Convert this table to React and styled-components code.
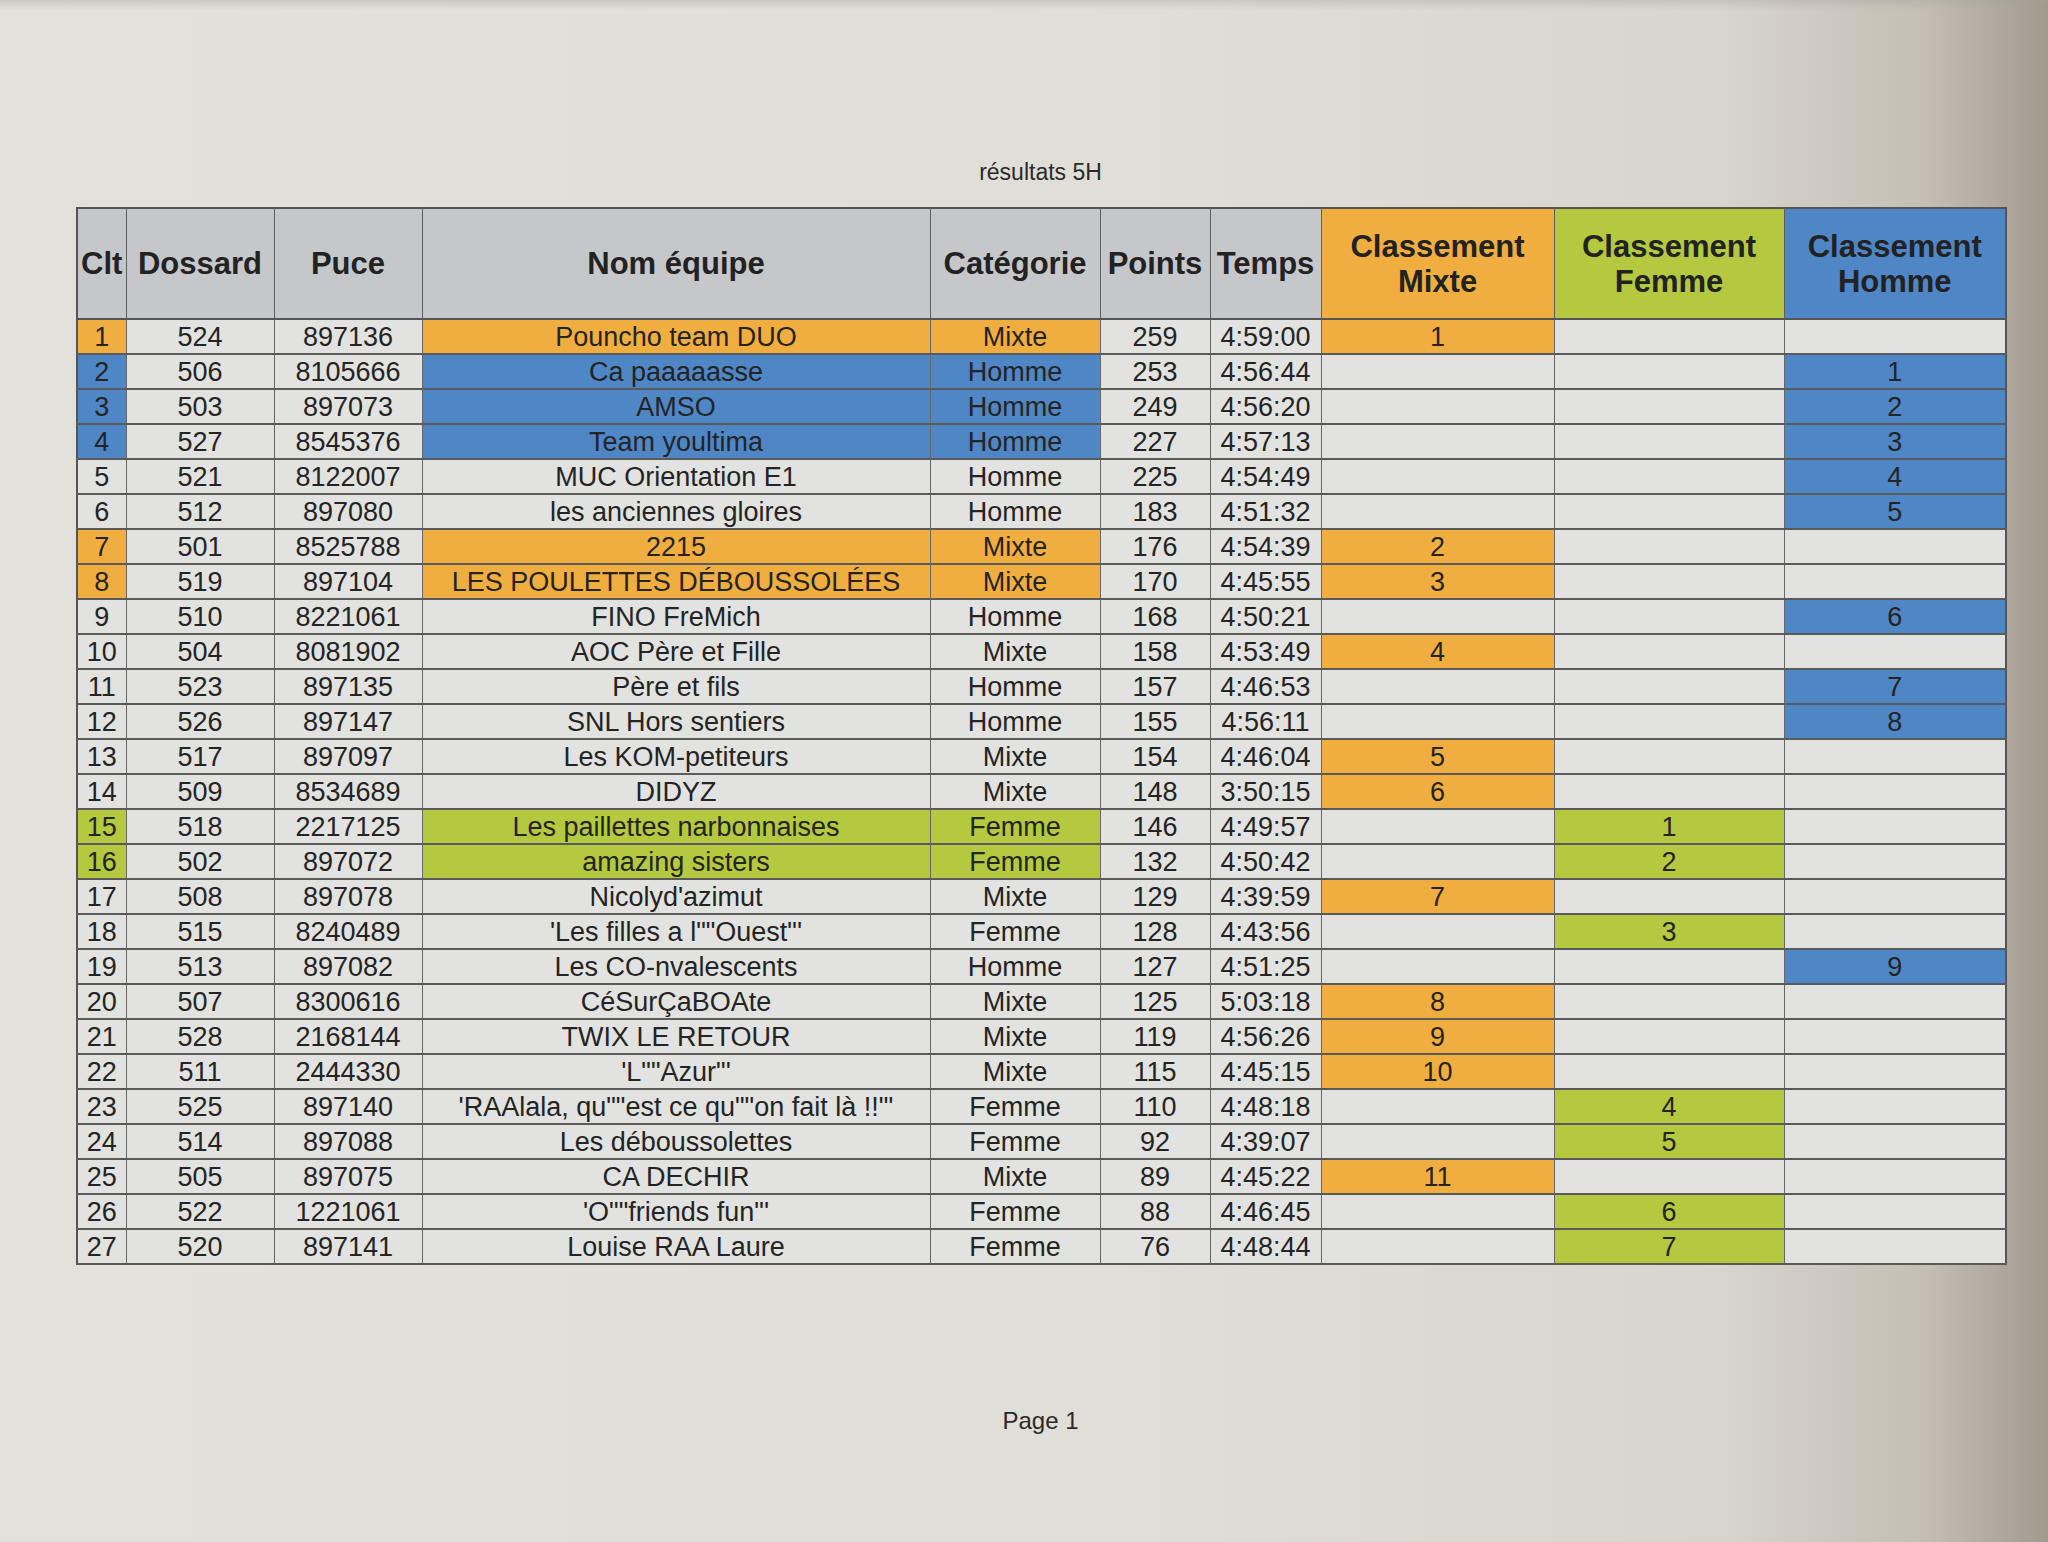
import React from "react"
import styled, { createGlobalStyle } from "styled-components"

const GlobalStyle = createGlobalStyle`
  html, body {
    margin: 0;
    padding: 0;
  }
  body {
    min-height: 1542px;
    font-family: "Liberation Sans", Arial, sans-serif;
    color: #232323;
    background:
      linear-gradient(180deg, rgba(160, 160, 158, 0.35) 0px, rgba(160, 160, 158, 0) 10px),
      linear-gradient(90deg, #e3e1dc 0%, #e0ded8 55%, #d8d5ce 84%, #c4beb4 94%, #a39a8e 100%);
  }
`

const tones = {
  orange: "#f1ae40",
  blue: "#4f86c6",
  green: "#b4c93f",
  grey: "#c6c7ca",
  plain: "#e2e2e0",
}

const Page = styled.div`
  width: 1929px;
  padding: 158px 0 0 76px;
`

const Title = styled.div`
  text-align: center;
  font-size: 23px;
  line-height: 28px;
  color: #2a2a2a;
  margin-bottom: 21px;
`

const Sheet = styled.table`
  width: 1929px;
  table-layout: fixed;
  border-collapse: collapse;
  border: 2px solid #555;
`

const HeadCell = styled.th`
  height: 109px;
  padding: 0;
  background: ${(p) => tones[p.$tone || "grey"]};
  border: 1.5px solid #5e5e5e;
  border-bottom: 2px solid #555;
  font-size: 31px;
  line-height: 35px;
  font-weight: 700;
  text-align: center;
  vertical-align: middle;
  white-space: nowrap;
  color: #222;
`

const Row = styled.tr`
  height: 33px;
`

const Cell = styled.td`
  padding: 0;
  height: 33px;
  background: ${(p) => tones[p.$tone || "plain"]};
  border-left: 1.5px solid #666;
  border-right: 1.5px solid #666;
  border-bottom: 2px solid #5a5a5a;
  font-size: 27px;
  line-height: 30px;
  text-align: center;
  vertical-align: middle;
  white-space: nowrap;
  overflow: hidden;
  color: #242424;
`

const Footer = styled.div`
  text-align: center;
  font-size: 24px;
  line-height: 28px;
  color: #2a2a2a;
  margin-top: 142px;
`

const widths = [49, 148, 148, 508, 170, 110, 111, 233, 230, 222]

const catTone = { Mixte: "orange", Femme: "green", Homme: "blue" }

// clt, dossard, puce, nom, catégorie, points, temps, rang, surligné
const rows = [
  [1, 524, 897136, "Pouncho team DUO", "Mixte", 259, "4:59:00", 1, true],
  [2, 506, 8105666, "Ca paaaaasse", "Homme", 253, "4:56:44", 1, true],
  [3, 503, 897073, "AMSO", "Homme", 249, "4:56:20", 2, true],
  [4, 527, 8545376, "Team youltima", "Homme", 227, "4:57:13", 3, true],
  [5, 521, 8122007, "MUC Orientation E1", "Homme", 225, "4:54:49", 4],
  [6, 512, 897080, "les anciennes gloires", "Homme", 183, "4:51:32", 5],
  [7, 501, 8525788, "2215", "Mixte", 176, "4:54:39", 2, true],
  [8, 519, 897104, "LES POULETTES DÉBOUSSOLÉES", "Mixte", 170, "4:45:55", 3, true],
  [9, 510, 8221061, "FINO FreMich", "Homme", 168, "4:50:21", 6],
  [10, 504, 8081902, "AOC Père et Fille", "Mixte", 158, "4:53:49", 4],
  [11, 523, 897135, "Père et fils", "Homme", 157, "4:46:53", 7],
  [12, 526, 897147, "SNL Hors sentiers", "Homme", 155, "4:56:11", 8],
  [13, 517, 897097, "Les KOM-petiteurs", "Mixte", 154, "4:46:04", 5],
  [14, 509, 8534689, "DIDYZ", "Mixte", 148, "3:50:15", 6],
  [15, 518, 2217125, "Les paillettes narbonnaises", "Femme", 146, "4:49:57", 1, true],
  [16, 502, 897072, "amazing sisters", "Femme", 132, "4:50:42", 2, true],
  [17, 508, 897078, "Nicolyd'azimut", "Mixte", 129, "4:39:59", 7],
  [18, 515, 8240489, "'Les filles a l\"\"Ouest\"'", "Femme", 128, "4:43:56", 3],
  [19, 513, 897082, "Les CO-nvalescents", "Homme", 127, "4:51:25", 9],
  [20, 507, 8300616, "CéSurÇaBOAte", "Mixte", 125, "5:03:18", 8],
  [21, 528, 2168144, "TWIX LE RETOUR", "Mixte", 119, "4:56:26", 9],
  [22, 511, 2444330, "'L\"\"Azur\"'", "Mixte", 115, "4:45:15", 10],
  [23, 525, 897140, "'RAAlala, qu\"\"est ce qu\"\"on fait là !!\"'", "Femme", 110, "4:48:18", 4],
  [24, 514, 897088, "Les déboussolettes", "Femme", 92, "4:39:07", 5],
  [25, 505, 897075, "CA DECHIR", "Mixte", 89, "4:45:22", 11],
  [26, 522, 1221061, "'O\"\"friends fun\"'", "Femme", 88, "4:46:45", 6],
  [27, 520, 897141, "Louise RAA Laure", "Femme", 76, "4:48:44", 7],
]

const rankCols = ["Mixte", "Femme", "Homme"]

const App = () => {
  return (
    <>
      <GlobalStyle />
      <Page>
        <Title>résultats 5H</Title>
        <Sheet>
          <colgroup>
            {widths.map((w, i) => (
              <col key={i} style={{ width: w }} />
            ))}
          </colgroup>
          <thead>
            <tr>
              <HeadCell>Clt</HeadCell>
              <HeadCell>Dossard</HeadCell>
              <HeadCell>Puce</HeadCell>
              <HeadCell>Nom équipe</HeadCell>
              <HeadCell>Catégorie</HeadCell>
              <HeadCell>Points</HeadCell>
              <HeadCell>Temps</HeadCell>
              <HeadCell $tone="orange">Classement<br />Mixte</HeadCell>
              <HeadCell $tone="green">Classement<br />Femme</HeadCell>
              <HeadCell $tone="blue">Classement<br />Homme</HeadCell>
            </tr>
          </thead>
          <tbody>
            {rows.map(([clt, dossard, puce, nom, cat, points, temps, rang, lit]) => {
              const tone = lit ? catTone[cat] : undefined
              return (
                <Row key={clt}>
                  <Cell $tone={tone}>{clt}</Cell>
                  <Cell>{dossard}</Cell>
                  <Cell>{puce}</Cell>
                  <Cell $tone={tone}>{nom}</Cell>
                  <Cell $tone={tone}>{cat}</Cell>
                  <Cell>{points}</Cell>
                  <Cell>{temps}</Cell>
                  {rankCols.map((c) => (
                    <Cell key={c} $tone={c === cat ? catTone[c] : undefined}>
                      {c === cat ? rang : ""}
                    </Cell>
                  ))}
                </Row>
              )
            })}
          </tbody>
        </Sheet>
        <Footer>Page 1</Footer>
      </Page>
    </>
  )
}

export default App
